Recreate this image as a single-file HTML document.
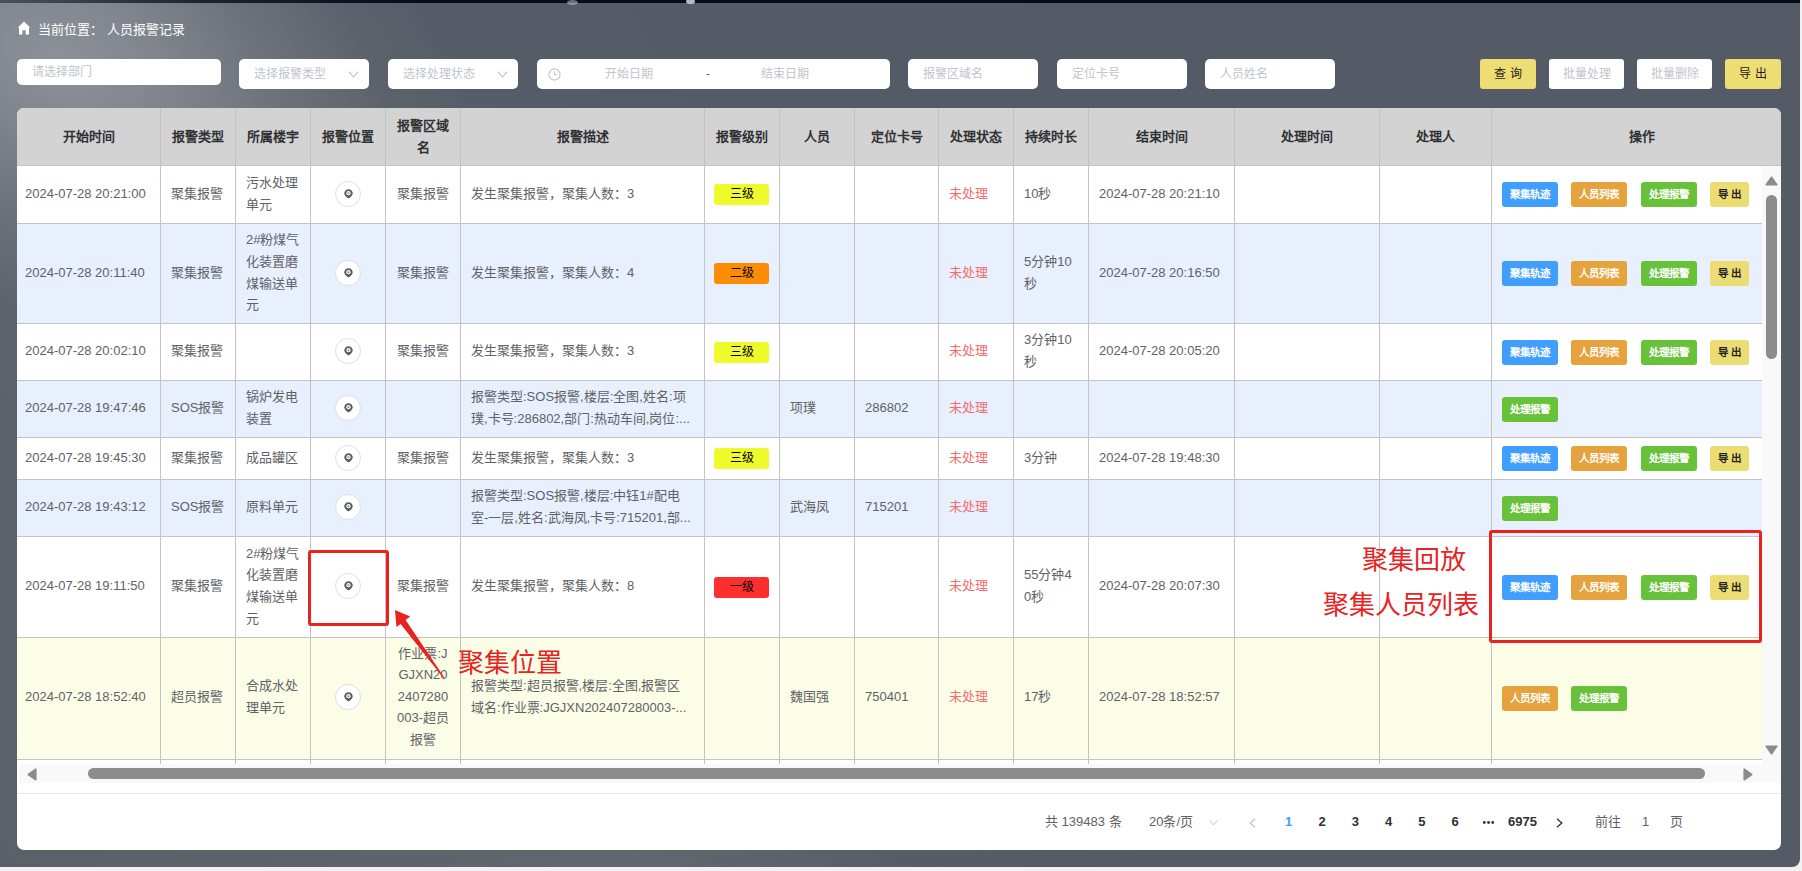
<!DOCTYPE html>
<html lang="zh-CN"><head><meta charset="utf-8"><title>人员报警记录</title>
<style>
*{box-sizing:border-box;margin:0;padding:0}
html,body{width:1802px;height:871px;overflow:hidden;background:#f1f1f1;font-family:"Liberation Sans",sans-serif;}
.a{position:absolute}
#bg{left:0;top:0;width:1800px;height:867px;border-bottom-right-radius:8px;overflow:hidden;
 background:linear-gradient(60deg,#5b5f68 0%,#5f636c 18%,#62666f 28%,#575d68 40%,#545b66 50%,#545b66 100%);}
#spot{left:-390px;top:-240px;width:900px;height:600px;transform:rotate(30deg);
 background:radial-gradient(closest-side,rgba(140,145,152,1) 0%,rgba(132,137,145,0.9) 25%,rgba(115,120,128,0.6) 55%,rgba(95,101,110,0.25) 80%,rgba(84,91,102,0) 100%);}
#topbar{left:0;top:0;width:1800px;height:3px;background:linear-gradient(90deg,#4b5058 0%,#1c2330 200px,#050f1c 400px,#000d1a 100%);}
.crumb{left:38px;top:21px;color:#fff;font-size:13px;line-height:18px;white-space:nowrap}
.inp{background:#fff;border-radius:5px;height:30px;top:59px;font-size:12px;color:#c0c4cc;line-height:30px;white-space:nowrap}
.btn{top:59px;height:30px;border-radius:3px;font-size:12px;line-height:30px;text-align:center;white-space:nowrap}
#panel{left:17px;top:108px;width:1764px;height:742px;background:#fff;border-radius:7px;overflow:hidden}
.hl{height:1px;background:#c3c3c3}
.vl{width:1px;background:#c3c3c3}
.cell{display:flex;align-items:center;padding:0 10px 2px 10px;font-size:13px;color:#606266;line-height:21.6px;word-break:break-all}
.hc{display:flex;align-items:center;justify-content:center;text-align:center;padding:0 10px;font-size:13px;color:#303133;font-weight:bold;line-height:21.6px;padding-top:1px}
.c{justify-content:center;text-align:center}
.red{color:#f56c6c}
.loc{width:26px;height:26px;border:1px solid #dcdfe6;border-radius:50%;background:#fff;position:relative}
.badge{width:55px;height:21px;border-radius:3px;font-size:12px;line-height:21px;text-align:center;color:#000}
.ob{width:56px;height:25px;border-radius:3px;font-size:10.5px;font-weight:bold;line-height:25px;text-align:center;color:#fff;margin-right:13px;flex:none;white-space:nowrap}
.ann{color:#e8231f;font-size:26px;line-height:30px;white-space:nowrap;font-weight:350}
.pg{top:813px;font-size:13px;line-height:18px;color:#606266;white-space:nowrap}
</style></head><body>
<div id="bg" class="a"><div id="spot" class="a"></div></div>
<div id="topbar" class="a"></div>
<div class="a" style="left:567px;top:0px;width:11px;height:5px;border-radius:50%;background:rgba(190,196,205,0.55)"></div>
<div class="a" style="left:686px;top:-1px;width:9px;height:5px;border-radius:50%;background:rgba(225,228,232,0.8)"></div>

<svg class="a" style="left:17px;top:21px" width="14" height="14" viewBox="0 0 14 14"><path d="M7 0.5 L13.2 6.6 L12 6.6 L12 13.5 L8.6 13.5 L8.6 9.2 L5.4 9.2 L5.4 13.5 L2 13.5 L2 6.6 L0.8 6.6 Z" fill="#fff"/></svg>
<div class="a crumb">当前位置：&nbsp;人员报警记录</div>
<div class="a inp" style="left:17px;width:204px;height:26px;line-height:26px;padding-left:15px">请选择部门</div>
<div class="a inp" style="left:239px;width:130px;padding-left:15px">选择报警类型<svg class="a" style="right:10px;top:12px" width="11" height="7" viewBox="0 0 11 7"><path d="M0.7 0.7 L5.5 5.8 L10.3 0.7" fill="none" stroke="#c0c4cc" stroke-width="1.2"/></svg></div>
<div class="a inp" style="left:388px;width:130px;padding-left:15px">选择处理状态<svg class="a" style="right:10px;top:12px" width="11" height="7" viewBox="0 0 11 7"><path d="M0.7 0.7 L5.5 5.8 L10.3 0.7" fill="none" stroke="#c0c4cc" stroke-width="1.2"/></svg></div>
<div class="a inp" style="left:537px;width:353px"><svg class="a" style="left:11px;top:9px" width="13" height="13" viewBox="0 0 13 13"><circle cx="6.5" cy="6.5" r="5.6" fill="none" stroke="#c0c4cc" stroke-width="1.1"/><path d="M6.5 3.2 V6.8 H9.2" fill="none" stroke="#c0c4cc" stroke-width="1.1"/></svg><span class="a" style="left:68px">开始日期</span><span class="a" style="left:169px;color:#606266">-</span><span class="a" style="left:224px">结束日期</span></div>
<div class="a inp" style="left:908px;width:130px;padding-left:15px">报警区域名</div>
<div class="a inp" style="left:1057px;width:130px;padding-left:15px">定位卡号</div>
<div class="a inp" style="left:1205px;width:130px;padding-left:15px">人员姓名</div>
<div class="a btn" style="left:1480px;width:56px;background:#eddd73;color:#222">查&nbsp;询</div>
<div class="a btn" style="left:1549px;width:75px;background:#fff;color:#c0c4cc">批量处理</div>
<div class="a btn" style="left:1637px;width:75px;background:#fff;color:#c0c4cc">批量删除</div>
<div class="a btn" style="left:1725px;width:56px;background:#eddd73;color:#222">导&nbsp;出</div>
<div id="panel" class="a"></div>
<div class="a" style="left:17px;top:108px;width:1764px;height:57px;background:#d3d3d3;border-radius:7px 7px 0 0"></div>
<div class="a" style="left:17px;top:166px;width:1745px;height:57px;background:#ffffff"></div>
<div class="a" style="left:17px;top:224px;width:1745px;height:99px;background:#e8effd"></div>
<div class="a" style="left:17px;top:324px;width:1745px;height:56px;background:#ffffff"></div>
<div class="a" style="left:17px;top:381px;width:1745px;height:56px;background:#e8effd"></div>
<div class="a" style="left:17px;top:438px;width:1745px;height:41px;background:#ffffff"></div>
<div class="a" style="left:17px;top:480px;width:1745px;height:56px;background:#e8effd"></div>
<div class="a" style="left:17px;top:537px;width:1745px;height:100px;background:#ffffff"></div>
<div class="a" style="left:17px;top:638px;width:1745px;height:121px;background:#fcfde6"></div>
<div class="a" style="left:1762px;top:166px;width:19px;height:617px;background:#f9f9f9"></div>
<div class="a" style="left:19px;top:764px;width:1762px;height:19px;background:#f9f9f9"></div>
<div class="a hl" style="left:17px;top:165px;width:1764px"></div>
<div class="a hl" style="left:17px;top:223px;width:1745px"></div>
<div class="a hl" style="left:17px;top:323px;width:1745px"></div>
<div class="a hl" style="left:17px;top:380px;width:1745px"></div>
<div class="a hl" style="left:17px;top:437px;width:1745px"></div>
<div class="a hl" style="left:17px;top:479px;width:1745px"></div>
<div class="a hl" style="left:17px;top:536px;width:1745px"></div>
<div class="a hl" style="left:17px;top:637px;width:1745px"></div>
<div class="a hl" style="left:17px;top:759px;width:1745px"></div>
<div class="a vl" style="left:160px;top:108px;height:656px"></div>
<div class="a vl" style="left:235px;top:108px;height:656px"></div>
<div class="a vl" style="left:310px;top:108px;height:656px"></div>
<div class="a vl" style="left:385px;top:108px;height:656px"></div>
<div class="a vl" style="left:460px;top:108px;height:656px"></div>
<div class="a vl" style="left:704px;top:108px;height:656px"></div>
<div class="a vl" style="left:779px;top:108px;height:656px"></div>
<div class="a vl" style="left:854px;top:108px;height:656px"></div>
<div class="a vl" style="left:938px;top:108px;height:656px"></div>
<div class="a vl" style="left:1013px;top:108px;height:656px"></div>
<div class="a vl" style="left:1088px;top:108px;height:656px"></div>
<div class="a vl" style="left:1234px;top:108px;height:656px"></div>
<div class="a vl" style="left:1379px;top:108px;height:656px"></div>
<div class="a vl" style="left:1491px;top:108px;height:656px"></div>
<div class="a" style="left:17px;top:793px;width:1764px;height:1px;background:#e4e7ed"></div>
<div class="a hc" style="left:17px;top:108px;width:143px;height:57px">开始时间</div>
<div class="a hc" style="left:161px;top:108px;width:74px;height:57px">报警类型</div>
<div class="a hc" style="left:236px;top:108px;width:74px;height:57px">所属楼宇</div>
<div class="a hc" style="left:311px;top:108px;width:74px;height:57px">报警位置</div>
<div class="a hc" style="left:386px;top:108px;width:74px;height:57px">报警区域<br>名</div>
<div class="a hc" style="left:461px;top:108px;width:243px;height:57px">报警描述</div>
<div class="a hc" style="left:705px;top:108px;width:74px;height:57px">报警级别</div>
<div class="a hc" style="left:780px;top:108px;width:74px;height:57px">人员</div>
<div class="a hc" style="left:855px;top:108px;width:83px;height:57px">定位卡号</div>
<div class="a hc" style="left:939px;top:108px;width:74px;height:57px">处理状态</div>
<div class="a hc" style="left:1014px;top:108px;width:74px;height:57px">持续时长</div>
<div class="a hc" style="left:1089px;top:108px;width:145px;height:57px">结束时间</div>
<div class="a hc" style="left:1235px;top:108px;width:144px;height:57px">处理时间</div>
<div class="a hc" style="left:1380px;top:108px;width:111px;height:57px">处理人</div>
<div class="a hc" style="left:1492px;top:108px;width:299px;height:57px">操作</div>
<div class="a cell" style="left:17px;top:166px;width:143px;height:57px;padding-left:8px;">2024-07-28 20:21:00</div>
<div class="a cell" style="left:161px;top:166px;width:74px;height:57px;">聚集报警</div>
<div class="a cell" style="left:236px;top:166px;width:74px;height:57px;">污水处理<br>单元</div>
<div class="a cell c" style="left:311px;top:166px;width:74px;height:57px;"><div class="loc"><svg class="a" style="left:8px;top:7px" width="9" height="10" viewBox="0 0 9 10"><path d="M4.5 0.2 C2.0 0.2 0.3 2 0.3 4.2 C0.3 6.2 2.4 8.2 4.5 9.6 C6.6 8.2 8.7 6.2 8.7 4.2 C8.7 2 7.0 0.2 4.5 0.2 Z" fill="#5e5e5e"/><circle cx="4.5" cy="4.2" r="2.1" fill="#fff"/><circle cx="4.5" cy="4.2" r="1.0" fill="#8a8a8a"/></svg></div></div>
<div class="a cell c" style="left:386px;top:166px;width:74px;height:57px;">聚集报警</div>
<div class="a cell" style="left:461px;top:166px;width:243px;height:57px;">发生聚集报警，聚集人数：3</div>
<div class="a badge" style="left:714px;top:184.0px;background:#eefa2c">三级</div>
<div class="a cell red" style="left:939px;top:166px;width:74px;height:57px;">未处理</div>
<div class="a cell" style="left:1014px;top:166px;width:74px;height:57px;">10秒</div>
<div class="a cell" style="left:1089px;top:166px;width:145px;height:57px;">2024-07-28 20:21:10</div>
<div class="a ob" style="left:1502px;top:182.0px;background:#409eff">聚集轨迹</div><div class="a ob" style="left:1571px;top:182.0px;background:#e6a23c">人员列表</div><div class="a ob" style="left:1641px;top:182.0px;background:#67c23a">处理报警</div><div class="a ob" style="left:1710px;top:182.0px;width:39px;background:#ebdc73;color:#222">导&nbsp;出</div>
<div class="a cell" style="left:17px;top:224px;width:143px;height:99px;padding-left:8px;">2024-07-28 20:11:40</div>
<div class="a cell" style="left:161px;top:224px;width:74px;height:99px;">聚集报警</div>
<div class="a cell" style="left:236px;top:224px;width:74px;height:99px;">2#粉煤气<br>化装置磨<br>煤输送单<br>元</div>
<div class="a cell c" style="left:311px;top:224px;width:74px;height:99px;"><div class="loc"><svg class="a" style="left:8px;top:7px" width="9" height="10" viewBox="0 0 9 10"><path d="M4.5 0.2 C2.0 0.2 0.3 2 0.3 4.2 C0.3 6.2 2.4 8.2 4.5 9.6 C6.6 8.2 8.7 6.2 8.7 4.2 C8.7 2 7.0 0.2 4.5 0.2 Z" fill="#5e5e5e"/><circle cx="4.5" cy="4.2" r="2.1" fill="#fff"/><circle cx="4.5" cy="4.2" r="1.0" fill="#8a8a8a"/></svg></div></div>
<div class="a cell c" style="left:386px;top:224px;width:74px;height:99px;">聚集报警</div>
<div class="a cell" style="left:461px;top:224px;width:243px;height:99px;">发生聚集报警，聚集人数：4</div>
<div class="a badge" style="left:714px;top:263.0px;background:#fd8c05">二级</div>
<div class="a cell red" style="left:939px;top:224px;width:74px;height:99px;">未处理</div>
<div class="a cell" style="left:1014px;top:224px;width:74px;height:99px;">5分钟10<br>秒</div>
<div class="a cell" style="left:1089px;top:224px;width:145px;height:99px;">2024-07-28 20:16:50</div>
<div class="a ob" style="left:1502px;top:261.0px;background:#409eff">聚集轨迹</div><div class="a ob" style="left:1571px;top:261.0px;background:#e6a23c">人员列表</div><div class="a ob" style="left:1641px;top:261.0px;background:#67c23a">处理报警</div><div class="a ob" style="left:1710px;top:261.0px;width:39px;background:#ebdc73;color:#222">导&nbsp;出</div>
<div class="a cell" style="left:17px;top:324px;width:143px;height:56px;padding-left:8px;">2024-07-28 20:02:10</div>
<div class="a cell" style="left:161px;top:324px;width:74px;height:56px;">聚集报警</div>
<div class="a cell c" style="left:311px;top:324px;width:74px;height:56px;"><div class="loc"><svg class="a" style="left:8px;top:7px" width="9" height="10" viewBox="0 0 9 10"><path d="M4.5 0.2 C2.0 0.2 0.3 2 0.3 4.2 C0.3 6.2 2.4 8.2 4.5 9.6 C6.6 8.2 8.7 6.2 8.7 4.2 C8.7 2 7.0 0.2 4.5 0.2 Z" fill="#5e5e5e"/><circle cx="4.5" cy="4.2" r="2.1" fill="#fff"/><circle cx="4.5" cy="4.2" r="1.0" fill="#8a8a8a"/></svg></div></div>
<div class="a cell c" style="left:386px;top:324px;width:74px;height:56px;">聚集报警</div>
<div class="a cell" style="left:461px;top:324px;width:243px;height:56px;">发生聚集报警，聚集人数：3</div>
<div class="a badge" style="left:714px;top:341.5px;background:#eefa2c">三级</div>
<div class="a cell red" style="left:939px;top:324px;width:74px;height:56px;">未处理</div>
<div class="a cell" style="left:1014px;top:324px;width:74px;height:56px;">3分钟10<br>秒</div>
<div class="a cell" style="left:1089px;top:324px;width:145px;height:56px;">2024-07-28 20:05:20</div>
<div class="a ob" style="left:1502px;top:339.5px;background:#409eff">聚集轨迹</div><div class="a ob" style="left:1571px;top:339.5px;background:#e6a23c">人员列表</div><div class="a ob" style="left:1641px;top:339.5px;background:#67c23a">处理报警</div><div class="a ob" style="left:1710px;top:339.5px;width:39px;background:#ebdc73;color:#222">导&nbsp;出</div>
<div class="a cell" style="left:17px;top:381px;width:143px;height:56px;padding-left:8px;">2024-07-28 19:47:46</div>
<div class="a cell" style="left:161px;top:381px;width:74px;height:56px;">SOS报警</div>
<div class="a cell" style="left:236px;top:381px;width:74px;height:56px;">锅炉发电<br>装置</div>
<div class="a cell c" style="left:311px;top:381px;width:74px;height:56px;"><div class="loc"><svg class="a" style="left:8px;top:7px" width="9" height="10" viewBox="0 0 9 10"><path d="M4.5 0.2 C2.0 0.2 0.3 2 0.3 4.2 C0.3 6.2 2.4 8.2 4.5 9.6 C6.6 8.2 8.7 6.2 8.7 4.2 C8.7 2 7.0 0.2 4.5 0.2 Z" fill="#5e5e5e"/><circle cx="4.5" cy="4.2" r="2.1" fill="#fff"/><circle cx="4.5" cy="4.2" r="1.0" fill="#8a8a8a"/></svg></div></div>
<div class="a cell" style="left:461px;top:381px;width:243px;height:56px;">报警类型:SOS报警,楼层:全图,姓名:项<br>璞,卡号:286802,部门:热动车间,岗位:...</div>
<div class="a cell" style="left:780px;top:381px;width:74px;height:56px;">项璞</div>
<div class="a cell" style="left:855px;top:381px;width:83px;height:56px;">286802</div>
<div class="a cell red" style="left:939px;top:381px;width:74px;height:56px;">未处理</div>
<div class="a ob" style="left:1502px;top:396.5px;background:#67c23a">处理报警</div>
<div class="a cell" style="left:17px;top:438px;width:143px;height:41px;padding-left:8px;">2024-07-28 19:45:30</div>
<div class="a cell" style="left:161px;top:438px;width:74px;height:41px;">聚集报警</div>
<div class="a cell" style="left:236px;top:438px;width:74px;height:41px;">成品罐区</div>
<div class="a cell c" style="left:311px;top:438px;width:74px;height:41px;"><div class="loc"><svg class="a" style="left:8px;top:7px" width="9" height="10" viewBox="0 0 9 10"><path d="M4.5 0.2 C2.0 0.2 0.3 2 0.3 4.2 C0.3 6.2 2.4 8.2 4.5 9.6 C6.6 8.2 8.7 6.2 8.7 4.2 C8.7 2 7.0 0.2 4.5 0.2 Z" fill="#5e5e5e"/><circle cx="4.5" cy="4.2" r="2.1" fill="#fff"/><circle cx="4.5" cy="4.2" r="1.0" fill="#8a8a8a"/></svg></div></div>
<div class="a cell c" style="left:386px;top:438px;width:74px;height:41px;">聚集报警</div>
<div class="a cell" style="left:461px;top:438px;width:243px;height:41px;">发生聚集报警，聚集人数：3</div>
<div class="a badge" style="left:714px;top:448.0px;background:#eefa2c">三级</div>
<div class="a cell red" style="left:939px;top:438px;width:74px;height:41px;">未处理</div>
<div class="a cell" style="left:1014px;top:438px;width:74px;height:41px;">3分钟</div>
<div class="a cell" style="left:1089px;top:438px;width:145px;height:41px;">2024-07-28 19:48:30</div>
<div class="a ob" style="left:1502px;top:446.0px;background:#409eff">聚集轨迹</div><div class="a ob" style="left:1571px;top:446.0px;background:#e6a23c">人员列表</div><div class="a ob" style="left:1641px;top:446.0px;background:#67c23a">处理报警</div><div class="a ob" style="left:1710px;top:446.0px;width:39px;background:#ebdc73;color:#222">导&nbsp;出</div>
<div class="a cell" style="left:17px;top:480px;width:143px;height:56px;padding-left:8px;">2024-07-28 19:43:12</div>
<div class="a cell" style="left:161px;top:480px;width:74px;height:56px;">SOS报警</div>
<div class="a cell" style="left:236px;top:480px;width:74px;height:56px;">原料单元</div>
<div class="a cell c" style="left:311px;top:480px;width:74px;height:56px;"><div class="loc"><svg class="a" style="left:8px;top:7px" width="9" height="10" viewBox="0 0 9 10"><path d="M4.5 0.2 C2.0 0.2 0.3 2 0.3 4.2 C0.3 6.2 2.4 8.2 4.5 9.6 C6.6 8.2 8.7 6.2 8.7 4.2 C8.7 2 7.0 0.2 4.5 0.2 Z" fill="#5e5e5e"/><circle cx="4.5" cy="4.2" r="2.1" fill="#fff"/><circle cx="4.5" cy="4.2" r="1.0" fill="#8a8a8a"/></svg></div></div>
<div class="a cell" style="left:461px;top:480px;width:243px;height:56px;">报警类型:SOS报警,楼层:中钰1#配电<br>室-一层,姓名:武海凤,卡号:715201,部...</div>
<div class="a cell" style="left:780px;top:480px;width:74px;height:56px;">武海凤</div>
<div class="a cell" style="left:855px;top:480px;width:83px;height:56px;">715201</div>
<div class="a cell red" style="left:939px;top:480px;width:74px;height:56px;">未处理</div>
<div class="a ob" style="left:1502px;top:495.5px;background:#67c23a">处理报警</div>
<div class="a cell" style="left:17px;top:537px;width:143px;height:100px;padding-left:8px;">2024-07-28 19:11:50</div>
<div class="a cell" style="left:161px;top:537px;width:74px;height:100px;">聚集报警</div>
<div class="a cell" style="left:236px;top:537px;width:74px;height:100px;">2#粉煤气<br>化装置磨<br>煤输送单<br>元</div>
<div class="a cell c" style="left:311px;top:537px;width:74px;height:100px;"><div class="loc"><svg class="a" style="left:8px;top:7px" width="9" height="10" viewBox="0 0 9 10"><path d="M4.5 0.2 C2.0 0.2 0.3 2 0.3 4.2 C0.3 6.2 2.4 8.2 4.5 9.6 C6.6 8.2 8.7 6.2 8.7 4.2 C8.7 2 7.0 0.2 4.5 0.2 Z" fill="#5e5e5e"/><circle cx="4.5" cy="4.2" r="2.1" fill="#fff"/><circle cx="4.5" cy="4.2" r="1.0" fill="#8a8a8a"/></svg></div></div>
<div class="a cell c" style="left:386px;top:537px;width:74px;height:100px;">聚集报警</div>
<div class="a cell" style="left:461px;top:537px;width:243px;height:100px;">发生聚集报警，聚集人数：8</div>
<div class="a badge" style="left:714px;top:576.5px;background:#fc2f2f">一级</div>
<div class="a cell red" style="left:939px;top:537px;width:74px;height:100px;">未处理</div>
<div class="a cell" style="left:1014px;top:537px;width:74px;height:100px;">55分钟4<br>0秒</div>
<div class="a cell" style="left:1089px;top:537px;width:145px;height:100px;">2024-07-28 20:07:30</div>
<div class="a ob" style="left:1502px;top:574.5px;background:#409eff">聚集轨迹</div><div class="a ob" style="left:1571px;top:574.5px;background:#e6a23c">人员列表</div><div class="a ob" style="left:1641px;top:574.5px;background:#67c23a">处理报警</div><div class="a ob" style="left:1710px;top:574.5px;width:39px;background:#ebdc73;color:#222">导&nbsp;出</div>
<div class="a cell" style="left:17px;top:638px;width:143px;height:121px;padding-left:8px;padding-bottom:4px;">2024-07-28 18:52:40</div>
<div class="a cell" style="left:161px;top:638px;width:74px;height:121px;padding-bottom:4px;">超员报警</div>
<div class="a cell" style="left:236px;top:638px;width:74px;height:121px;padding-bottom:4px;">合成水处<br>理单元</div>
<div class="a cell c" style="left:311px;top:638px;width:74px;height:121px;padding-bottom:4px;"><div class="loc"><svg class="a" style="left:8px;top:7px" width="9" height="10" viewBox="0 0 9 10"><path d="M4.5 0.2 C2.0 0.2 0.3 2 0.3 4.2 C0.3 6.2 2.4 8.2 4.5 9.6 C6.6 8.2 8.7 6.2 8.7 4.2 C8.7 2 7.0 0.2 4.5 0.2 Z" fill="#5e5e5e"/><circle cx="4.5" cy="4.2" r="2.1" fill="#fff"/><circle cx="4.5" cy="4.2" r="1.0" fill="#8a8a8a"/></svg></div></div>
<div class="a cell c" style="left:386px;top:638px;width:74px;height:121px;padding-bottom:4px;">作业票:J<br>GJXN20<br>2407280<br>003-超员<br>报警</div>
<div class="a cell" style="left:461px;top:638px;width:243px;height:121px;padding-bottom:4px;">报警类型:超员报警,楼层:全图,报警区<br>域名:作业票:JGJXN202407280003-...</div>
<div class="a cell" style="left:780px;top:638px;width:74px;height:121px;padding-bottom:4px;">魏国强</div>
<div class="a cell" style="left:855px;top:638px;width:83px;height:121px;padding-bottom:4px;">750401</div>
<div class="a cell red" style="left:939px;top:638px;width:74px;height:121px;padding-bottom:4px;">未处理</div>
<div class="a cell" style="left:1014px;top:638px;width:74px;height:121px;padding-bottom:4px;">17秒</div>
<div class="a cell" style="left:1089px;top:638px;width:145px;height:121px;padding-bottom:4px;">2024-07-28 18:52:57</div>
<div class="a ob" style="left:1502px;top:686.0px;background:#e6a23c">人员列表</div><div class="a ob" style="left:1571px;top:686.0px;background:#67c23a">处理报警</div>
<div class="a" style="left:1766px;top:195px;width:11px;height:164px;border-radius:6px;background:#8c8c8c"></div>
<svg class="a" style="left:1765px;top:176px" width="13" height="10" viewBox="0 0 13 10"><path d="M6.5 1.3 L11.8 8.8 L1.2 8.8 Z" fill="#8c8c8c" stroke="#8c8c8c" stroke-linejoin="round" stroke-width="1.6"/></svg>
<svg class="a" style="left:1765px;top:745px" width="13" height="10" viewBox="0 0 13 10"><path d="M6.5 8.7 L11.8 1.2 L1.2 1.2 Z" fill="#8c8c8c" stroke="#8c8c8c" stroke-linejoin="round" stroke-width="1.6"/></svg>
<div class="a" style="left:88px;top:768px;width:1617px;height:11px;border-radius:6px;background:#8c8c8c"></div>
<svg class="a" style="left:27px;top:768px" width="10" height="13" viewBox="0 0 10 13"><path d="M1.3 6.5 L8.8 1.2 L8.8 11.8 Z" fill="#8c8c8c" stroke="#8c8c8c" stroke-linejoin="round" stroke-width="1.6"/></svg>
<svg class="a" style="left:1743px;top:768px" width="10" height="13" viewBox="0 0 10 13"><path d="M8.7 6.5 L1.2 1.2 L1.2 11.8 Z" fill="#8c8c8c" stroke="#8c8c8c" stroke-linejoin="round" stroke-width="1.6"/></svg>
<div class="a pg" style="left:1045px">共 139483 条</div>
<div class="a pg" style="left:1149px">20条/页</div>
<svg class="a" style="left:1209px;top:820px" width="9" height="6" viewBox="0 0 9 6"><path d="M0.5 0.5 L4.5 5 L8.5 0.5" fill="none" stroke="#c0c4cc" stroke-width="1"/></svg>
<svg class="a" style="left:1249px;top:818px" width="7" height="10" viewBox="0 0 7 10"><path d="M6 0.8 L1.2 5 L6 9.2" fill="none" stroke="#c0c4cc" stroke-width="1.3"/></svg>
<div class="a pg" style="left:1273.5px;width:30px;text-align:center;font-weight:bold;color:#409eff">1</div>
<div class="a pg" style="left:1307.2px;width:30px;text-align:center;font-weight:bold;color:#303133">2</div>
<div class="a pg" style="left:1340.3px;width:30px;text-align:center;font-weight:bold;color:#303133">3</div>
<div class="a pg" style="left:1373.5px;width:30px;text-align:center;font-weight:bold;color:#303133">4</div>
<div class="a pg" style="left:1406.9px;width:30px;text-align:center;font-weight:bold;color:#303133">5</div>
<div class="a pg" style="left:1440.1px;width:30px;text-align:center;font-weight:bold;color:#303133">6</div>
<svg class="a" style="left:1482px;top:820px" width="13" height="5" viewBox="0 0 13 5"><circle cx="2.3" cy="2.5" r="1.4" fill="#303133"/><circle cx="6.5" cy="2.5" r="1.4" fill="#303133"/><circle cx="10.7" cy="2.5" r="1.4" fill="#303133"/></svg>
<div class="a pg" style="left:1508px;font-weight:bold;color:#303133">6975</div>
<svg class="a" style="left:1556px;top:818px" width="7" height="10" viewBox="0 0 7 10"><path d="M1 0.8 L5.8 5 L1 9.2" fill="none" stroke="#303133" stroke-width="1.3"/></svg>
<div class="a pg" style="left:1595px">前往</div>
<div class="a pg" style="left:1642px">1</div>
<div class="a pg" style="left:1670px">页</div>
<div class="a" style="left:308px;top:550px;width:81px;height:76px;border:3px solid #e8231f;border-radius:3px"></div>
<div class="a" style="left:1489px;top:530px;width:273px;height:113px;border:3px solid #e8231f;border-radius:3px"></div>
<svg class="a" style="left:380px;top:595px" width="80" height="90" viewBox="380 595 80 90"><path d="M395 610 L410.2 616.6 L405.6 620.0 L445.0 678.6 L444.0 678.8 L400.6 624.0 L396.4 627.0 Z" fill="#e8231f"/></svg>
<div class="a ann" style="left:458px;top:648px">聚集位置</div>
<div class="a ann" style="left:1362px;top:545px">聚集回放</div>
<div class="a ann" style="left:1323px;top:590px">聚集人员列表</div>
</body></html>
